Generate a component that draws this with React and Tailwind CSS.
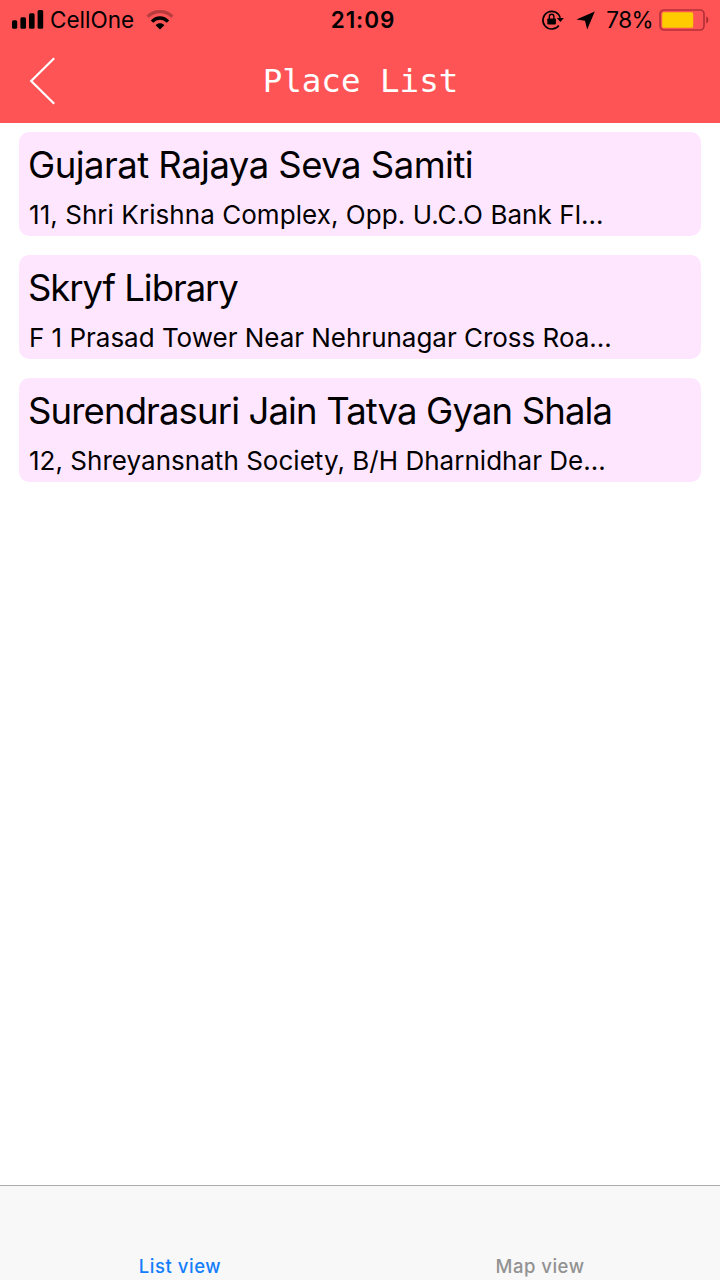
const places = [
  {
    name: "Gujarat Rajaya Seva Samiti",
    address: "11, Shri Krishna Complex, Opp. U.C.O Bank Fl...",
    nameClass: "tracking-[-0.53px]",
    addressClass: "tracking-[0.06px]",
  },
  {
    name: "Skryf Library",
    address: "F 1 Prasad Tower Near Nehrunagar Cross Roa...",
    nameClass: "tracking-[-1.05px]",
    addressClass: "tracking-[-0.02px]",
  },
  {
    name: "Surendrasuri Jain Tatva Gyan Shala",
    address: "12, Shreyansnath Society, B/H Dharnidhar De...",
    nameClass: "tracking-[-0.87px]",
    addressClass: "tracking-[0.03px]",
  },
];

function SignalIcon() {
  return (
    <svg className="h-5 w-8" viewBox="0 0 32 20" fill="currentColor">
      <rect x="0" y="10.2" width="5.2" height="8.6" rx="1.5" />
      <rect x="8.4" y="7.2" width="5.6" height="11.6" rx="1.5" />
      <rect x="17" y="3.3" width="5.6" height="15.5" rx="1.5" />
      <rect x="25.6" y="0" width="5.6" height="18.8" rx="1.5" />
    </svg>
  );
}

function WifiIcon() {
  return (
    <svg className="h-5 w-7" viewBox="0 0 28 20" fill="none" stroke="currentColor">
      <path d="M1.6 6.6C8.6 0 19.4 0 26.4 6.6" strokeWidth="3.2" opacity="0.28" />
      <path d="M6 11.6C10.5 6.7 17.5 6.7 22 11.6" strokeWidth="3.4" />
      <path d="M9.7 15.2C12 12.6 16 12.6 18.3 15.2L14 19.4Z" fill="currentColor" stroke="none" />
    </svg>
  );
}

function RotationLockIcon() {
  return (
    <svg className="h-[22px] w-6" viewBox="0 0 24 22" fill="none" stroke="currentColor">
      <path d="M17.8 16.4A8.8 8.8 0 1 1 19.2 8.8" strokeWidth="1.6" />
      <path d="M15.8 9H22.8L19.4 13Z" fill="currentColor" stroke="none" />
      <rect x="6.3" y="9.4" width="8.6" height="6" rx="0.8" fill="currentColor" stroke="none" />
      <path d="M8.3 10V7.6A2.3 2.3 0 0 1 12.9 7.6V10" strokeWidth="1.4" />
    </svg>
  );
}

function LocationIcon() {
  return (
    <svg className="h-[19px] w-[19px]" viewBox="0 0 19 19" fill="currentColor">
      <path d="M18.8 0.4L0.4 8.6L9 9.8L11.2 18.6Z" />
    </svg>
  );
}

function BatteryIcon() {
  return (
    <svg className="h-[22px] w-[50px]" viewBox="0 0 50 22">
      <rect x="1" y="1" width="44" height="20" rx="4" fill="none" stroke="#b53038" strokeWidth="1.7" />
      <rect x="3.2" y="3.2" width="31" height="15.6" rx="1.5" fill="#ffcc00" />
      <path d="M47.3 7.6C50 8.7 50 13.3 47.3 14.4Z" fill="#a92a30" />
    </svg>
  );
}

function StatusBar() {
  return (
    <div className="grid h-10 grid-cols-3 items-center text-[22.5px] leading-7 text-black">
      <div className="flex items-center pl-3">
        <SignalIcon />
        <span className="ml-1.5">CellOne</span>
        <span className="ml-3">
          <WifiIcon />
        </span>
      </div>
      <span className="pl-1.5 text-center font-semibold tracking-[0.9px]">21:09</span>
      <div className="flex items-center justify-end pr-[11px]">
        <RotationLockIcon />
        <span className="ml-[11px]">
          <LocationIcon />
        </span>
        <span className="ml-[11px] tracking-[-0.6px]">78%</span>
        <span className="ml-1.5">
          <BatteryIcon />
        </span>
      </div>
    </div>
  );
}

function Header() {
  return (
    <header className="h-[123px] bg-[#ff5456]">
      <StatusBar />
      <div className="grid h-[82px] grid-cols-[100px_1fr_100px] items-center">
        <button className="pl-[29px] text-white" aria-label="Back">
          <svg className="h-12 w-7" viewBox="0 0 28 48" fill="none" stroke="currentColor" strokeWidth="2.2">
            <path d="M25.2 1.2L2.2 24L25.2 46.8" />
          </svg>
        </button>
        <h1 className="pl-px text-center font-['DejaVu_Sans_Mono',monospace] text-[32.5px] leading-10 text-white">
          Place List
        </h1>
      </div>
    </header>
  );
}

function PlaceCard({ place }) {
  return (
    <li className="h-[104px] rounded-[10px] bg-[#ffe6ff] px-2.5 pt-2.5 whitespace-nowrap text-black">
      <h2 className={"-ml-px text-[36.5px] leading-[47px] " + place.nameClass}>{place.name}</h2>
      <p className={"mt-2.5 text-[26px] leading-8 " + place.addressClass}>{place.address}</p>
    </li>
  );
}

export default function App() {
  return (
    <div className="flex h-[1280px] w-[720px] flex-col overflow-hidden bg-white font-['Inter',sans-serif]">
      <Header />
      <main className="flex-1 px-[19px] pt-[9px]">
        <ul className="flex flex-col gap-[19px]">
          {places.map((place) => (
            <PlaceCard key={place.name} place={place} />
          ))}
        </ul>
      </main>
      <nav className="grid h-[95px] grid-cols-2 items-end border-t border-[#acacac] bg-[#f8f8f8] pb-0.5 text-center text-[18.5px] leading-6 font-medium">
        <span className="tracking-[0.55px] text-[#157efb]">List view</span>
        <span className="tracking-[0.5px] text-[#929292]">Map view</span>
      </nav>
    </div>
  );
}
